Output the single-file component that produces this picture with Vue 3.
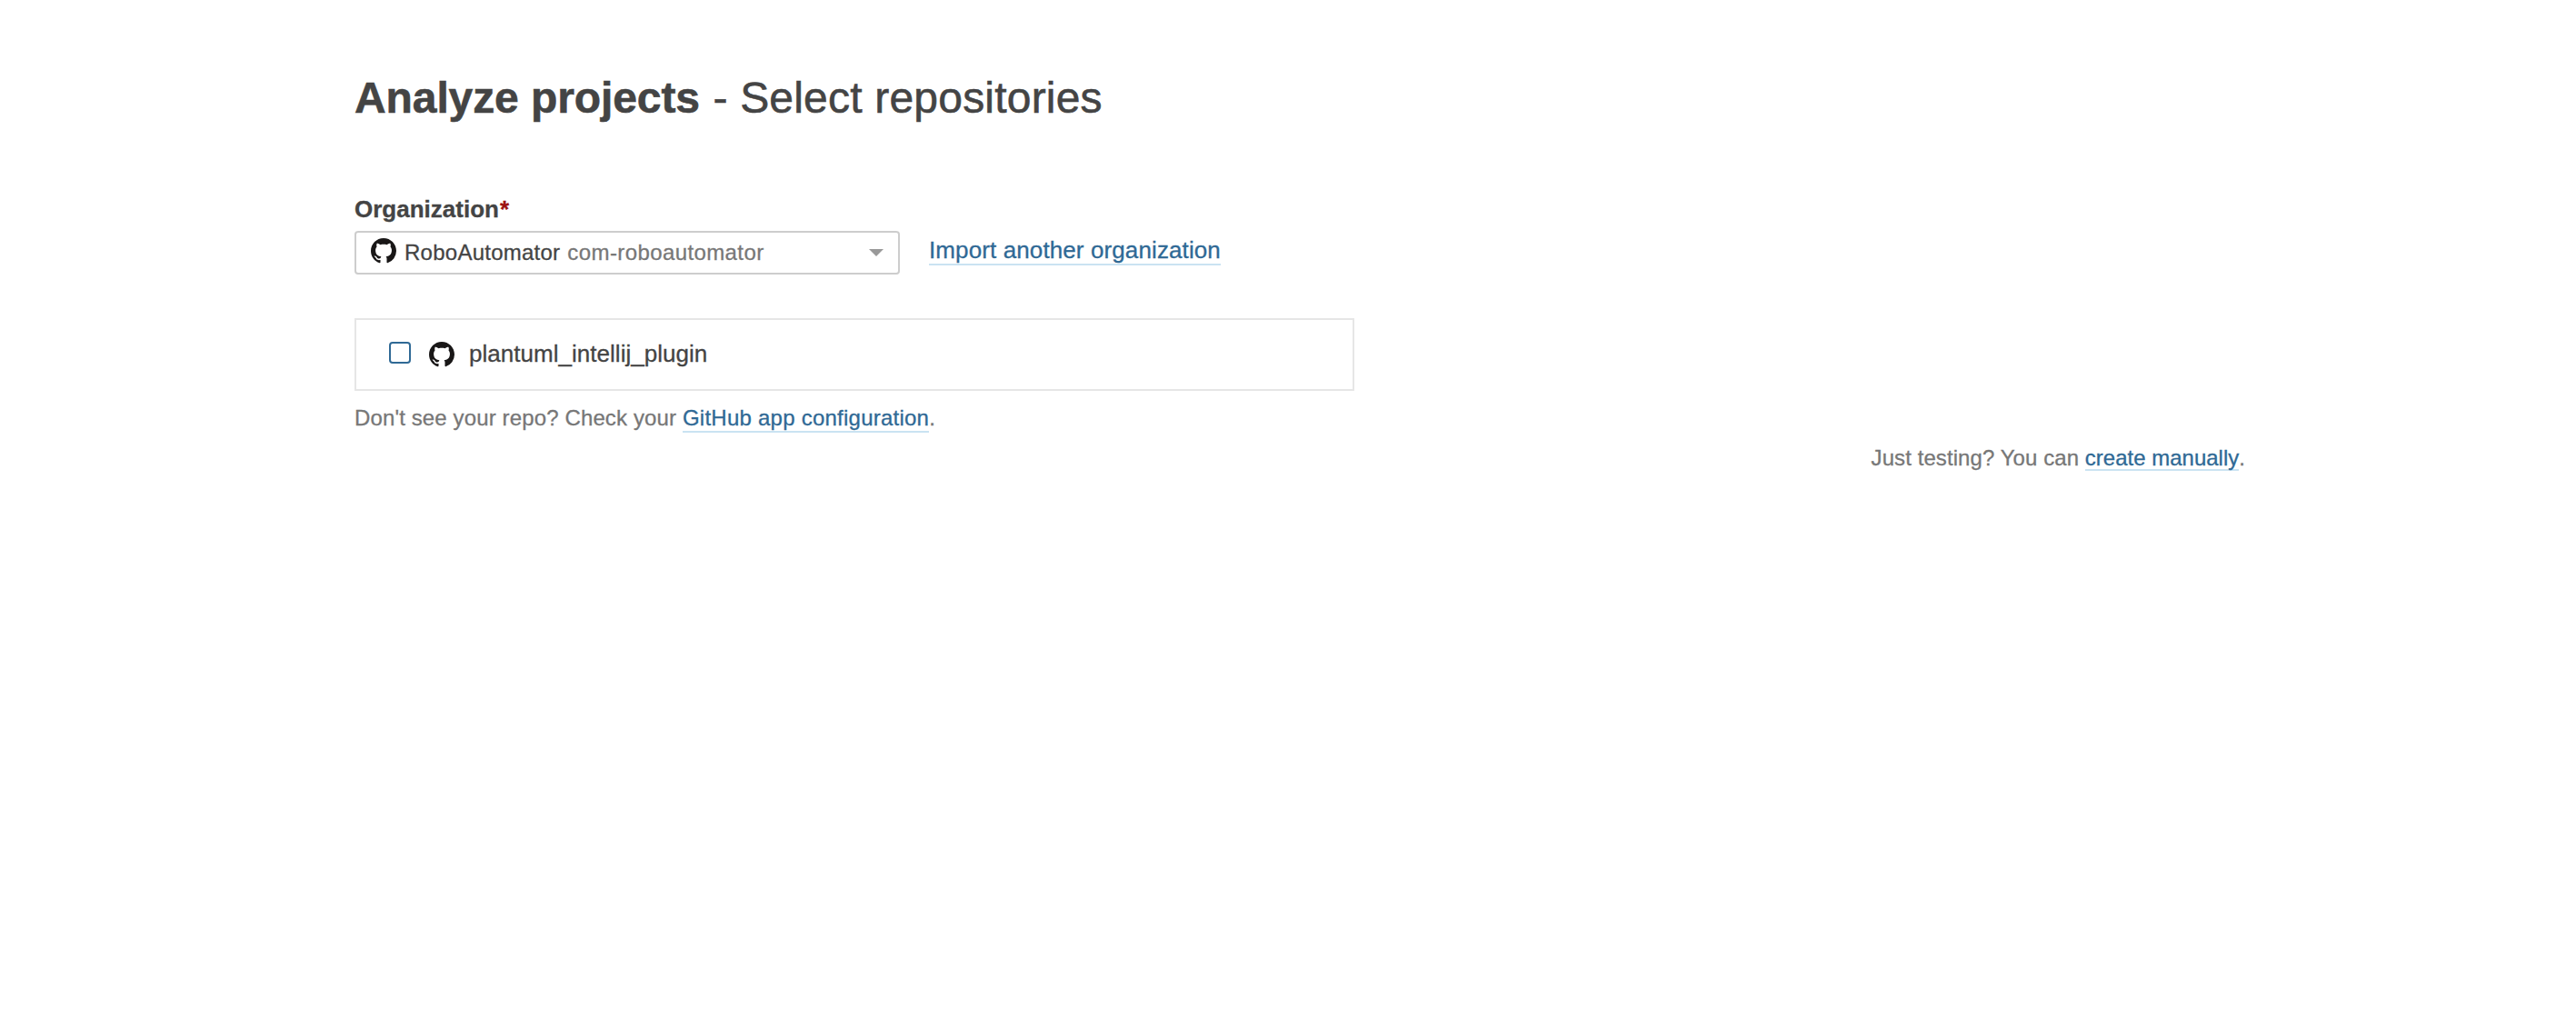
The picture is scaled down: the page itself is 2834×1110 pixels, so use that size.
<script setup>
import { ref } from 'vue'

const organization = { name: 'RoboAutomator', key: 'com-roboautomator' }
const repositories = ref([{ name: 'plantuml_intellij_plugin', checked: false }])
const githubMark =
  'M8 0C3.58 0 0 3.58 0 8c0 3.54 2.29 6.53 5.47 7.59.4.07.55-.17.55-.38 0-.19-.01-.82-.01-1.49-2.01.37-2.53-.49-2.69-.94-.09-.23-.48-.94-.82-1.13-.28-.15-.68-.52-.01-.53.63-.01 1.08.58 1.23.82.72 1.21 1.87.87 2.33.66.07-.52.28-.87.51-1.07-1.78-.2-3.64-.89-3.64-3.95 0-.87.31-1.59.82-2.15-.08-.2-.36-1.02.08-2.12 0 0 .67-.21 2.2.82.64-.18 1.32-.27 2-.27s1.36.09 2 .27c1.53-1.04 2.2-.82 2.2-.82.44 1.1.16 1.92.08 2.12.51.56.82 1.27.82 2.15 0 3.07-1.87 3.75-3.65 3.95.29.25.54.73.54 1.48 0 1.07-.01 1.93-.01 2.2 0 .21.15.46.55.38A8.01 8.01 0 0 0 16 8c0-4.42-3.58-8-8-8z'
</script>

<template>
  <main class="page">
    <h1 class="title"><strong>Analyze projects</strong> <span>- Select repositories</span></h1>
    <label class="label">Organization<em>*</em></label>
    <div class="organization">
      <div class="select">
        <svg class="mark" viewBox="0 0 16 16"><path :d="githubMark" /></svg>
        <span class="org-name">{{ organization.name }}</span>
        <span class="org-key">{{ organization.key }}</span>
        <svg class="caret" viewBox="0 0 16 8"><path d="M0 0h16L8 8z" /></svg>
      </div>
      <div class="import"><a class="link">Import another organization</a></div>
    </div>
    <ul class="repositories">
      <li v-for="repo in repositories" :key="repo.name" class="repository">
        <span class="checkbox" role="checkbox" :aria-checked="repo.checked" @click="repo.checked = !repo.checked"></span>
        <svg class="mark" viewBox="0 0 16 16"><path :d="githubMark" /></svg>
        <span class="repo-name">{{ repo.name }}</span>
      </li>
    </ul>
    <p class="hint">Don't see your repo? Check your <a class="link">GitHub app configuration</a>.</p>
    <p class="manual">Just testing? You can <a class="link">create manually</a>.</p>
  </main>
</template>

<style>
body {
  background: #fff;
}
</style>

<style scoped>
.page {
  box-sizing: border-box;
  min-height: 1110px;
  padding: 78px 364px 0 390px;
  color: #444;
  font-family: "Liberation Sans", Arial, sans-serif;
  font-size: 24px;
  -webkit-text-stroke: 0.3px;
}
.title {
  margin: 0;
  font-size: 48px;
  font-weight: 400;
  line-height: 60px;
  letter-spacing: 0.2px;
  -webkit-text-stroke: 0.6px;
}
.title strong {
  letter-spacing: -0.1px;
}
.title span {
  margin-left: 1px;
}
.label {
  display: block;
  margin-top: 77px;
  font-size: 26px;
  font-weight: 700;
  line-height: 30px;
}
.label em {
  margin-left: 1px;
  color: #9c1212;
  font-style: normal;
}
.organization {
  display: flex;
  margin-top: 9px;
  gap: 32px;
}
.select {
  box-sizing: border-box;
  display: flex;
  align-items: center;
  width: 600px;
  height: 48px;
  padding: 0 16px;
  border: 2px solid #cdcdcd;
  border-radius: 4px;
  line-height: 44px;
}
.mark {
  flex: none;
  width: 28px;
  height: 28px;
  fill: #191717;
}
.select .mark {
  margin-top: -4px;
}
.org-name {
  margin-left: 9px;
  letter-spacing: 0.25px;
}
.org-key {
  margin-left: 8px;
  color: #777;
  letter-spacing: 0.4px;
}
.caret {
  width: 16px;
  height: 8px;
  margin-left: auto;
  fill: #999;
}
.import {
  padding-top: 6px;
  font-size: 26px;
  line-height: 30px;
  letter-spacing: 0.11px;
}
.link {
  color: #2f6995;
  border-bottom: 2px solid #cae3f2;
}
.repositories {
  box-sizing: border-box;
  width: 1100px;
  height: 80px;
  margin: 48px 0 0;
  padding: 0;
  border: 2px solid #e6e6e6;
  list-style: none;
}
.repository {
  display: flex;
  align-items: flex-start;
  padding: 24px 36px;
}
.checkbox {
  box-sizing: border-box;
  width: 24px;
  height: 24px;
  margin-right: 20px;
  border: 2px solid #2f6995;
  border-radius: 4px;
}
.repo-name {
  margin: -2px 0 0 16px;
  font-size: 26px;
  line-height: 30px;
  letter-spacing: 0.03px;
}
.hint,
.manual {
  margin: 0;
  color: #777;
  line-height: 28px;
}
.hint {
  margin-top: 16px;
  letter-spacing: 0.13px;
}
.hint .link {
  padding-bottom: 1px;
  letter-spacing: 0.24px;
}
.manual {
  margin-top: 16px;
  text-align: right;
  letter-spacing: 0.08px;
}
.manual .link {
  display: inline-block;
  line-height: 24px;
  letter-spacing: 0;
}
</style>
